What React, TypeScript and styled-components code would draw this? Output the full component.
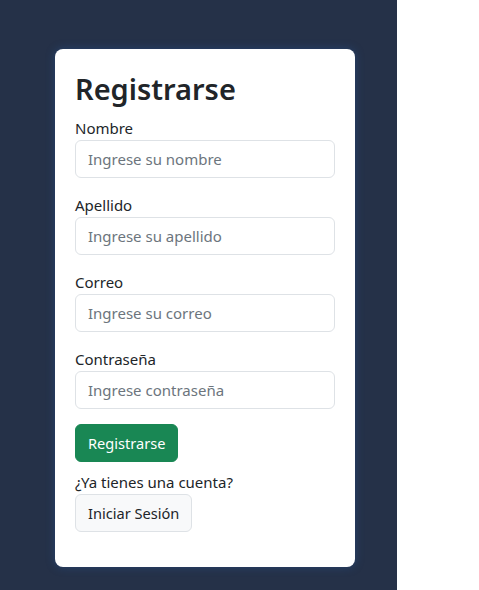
import React from "react";
import styled, { createGlobalStyle } from "styled-components";

const Global = createGlobalStyle`
  html, body { margin: 0; padding: 0; background: #ffffff; }
  body { font-family: "Noto Sans", "Open Sans", sans-serif; color: #212529; }
  * { box-sizing: border-box; }
`;

const Page = styled.div`
  display: flex;
  width: 479px;
  height: 590px;
  background: #ffffff;
`;

const Panel = styled.div`
  width: 397px;
  height: 590px;
  background: #253148;
  padding: 49px 0 0 55px;
`;

const Card = styled.div`
  width: 300px;
  background: #ffffff;
  border-radius: 8px;
  padding: 20px 20px 20px;
  box-shadow: 0 0 10px rgba(40, 90, 160, 0.45);
`;

const Title = styled.h2`
  margin: 0 0 8px;
  padding-top: 1px;
  font-size: 29px;
  line-height: 38.4px;
  font-weight: 600;
  color: #212529;
`;

const Group = styled.div`
  display: flex;
  flex-direction: column;
  margin-bottom: 15px;
`;

const Label = styled.label`
  font-size: 15px;
  line-height: 24px;
  color: #212529;
`;

const Input = styled.input`
  width: 260px;
  height: 38px;
  padding: 6px 12px;
  font-family: inherit;
  font-size: 15px;
  color: #212529;
  border: 1px solid #dee2e6;
  border-radius: 6px;
  background: #ffffff;
  outline: none;
  &::placeholder { color: #6c757d; opacity: 1; }
`;

const Button = styled.button<{ $variant: "success" | "light" }>`
  height: 38px;
  padding: 6px 12px;
  font-family: inherit;
  font-size: 14.6px;
  line-height: 24px;
  border-radius: 6px;
  cursor: pointer;
  border: 1px solid ${(p) => (p.$variant === "success" ? "#198754" : "#dee2e6")};
  background: ${(p) => (p.$variant === "success" ? "#198754" : "#f8f9fa")};
  color: ${(p) => (p.$variant === "success" ? "#ffffff" : "#212529")};
`;

const Actions = styled.div`
  display: flex;
  flex-direction: column;
  align-items: flex-start;
`;

const Note = styled.p`
  margin: 8px 0 0;
  font-size: 15px;
  line-height: 24px;
`;

const Bottom = styled.div`
  margin-bottom: 15px;
`;

const fields = [
  { label: "Nombre", placeholder: "Ingrese su nombre", type: "text" },
  { label: "Apellido", placeholder: "Ingrese su apellido", type: "text" },
  { label: "Correo", placeholder: "Ingrese su correo", type: "email" },
  { label: "Contraseña", placeholder: "Ingrese contraseña", type: "password" },
];

export default function App() {
  return (
    <>
      <Global />
      <Page>
        <Panel>
          <Card>
            <Title>Registrarse</Title>
            {fields.map((f) => (
              <Group key={f.label}>
                <Label>{f.label}</Label>
                <Input type={f.type} placeholder={f.placeholder} />
              </Group>
            ))}
            <Actions>
              <Button $variant="success">Registrarse</Button>
              <Note>¿Ya tienes una cuenta?</Note>
              <Bottom>
                <Button $variant="light">Iniciar Sesión</Button>
              </Bottom>
            </Actions>
          </Card>
        </Panel>
      </Page>
    </>
  );
}
